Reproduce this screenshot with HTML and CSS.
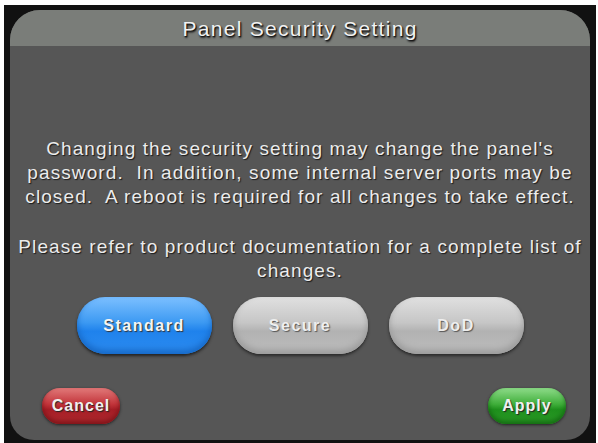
FILE: index.html
```html
<!DOCTYPE html>
<html lang="en">
<head>
  <meta charset="UTF-8">
  <title>Panel Security Setting</title>
  <link rel="stylesheet" href="styles.css">
</head>
<body>
  <div class="frame">
    <div class="panel">
      <div class="title">Panel Security Setting</div>
      <div class="body">
        <p class="msg">Changing the security setting may change the panel's<br>password.&nbsp; In addition, some internal server ports may be<br>closed.&nbsp; A reboot is required for all changes to take effect.</p>
        <p class="msg">Please refer to product documentation for a complete list of<br>changes.</p>
        <div class="choices">
          <button class="pill blue">Standard</button>
          <button class="pill grey">Secure</button>
          <button class="pill grey">DoD</button>
        </div>
      </div>
      <div class="actions">
        <button class="small red">Cancel</button>
        <button class="small green">Apply</button>
      </div>
    </div>
  </div>
</body>
</html>
```

FILE: styles.css
```css
* {
  box-sizing: border-box;
}

html, body {
  margin: 0;
  padding: 0;
  height: 100%;
  background: #fff;
  font-family: 'Liberation Sans', Arial, sans-serif;
}

.frame {
  margin: 5px 2px 0 4px;
  height: 438px;
  background: #111;
  padding: 5px 6px 3px 6px;
}

.panel {
  height: 100%;
  background: #565656;
  border-radius: 30px 30px 24px 24px;
  display: flex;
  flex-direction: column;
  overflow: hidden;
}

.title {
  height: 36px;
  background: #7a7d79;
  color: #f2f2f2;
  text-align: center;
  font-size: 21px;
  letter-spacing: 1.3px;
  line-height: 38px;
  text-shadow: 1px 1px 1px #111, 1px 2px 2px #222;
}

.body {
  flex-grow: 1;
  padding-top: 91px;
}

.msg {
  margin: 0 0 26px;
  text-align: center;
  white-space: nowrap;
  color: #ececec;
  font-size: 19px;
  letter-spacing: 1.1px;
  line-height: 24px;
  text-shadow: 1px 1px 1px #1a1a1a;
}

.choices {
  display: flex;
  justify-content: center;
  gap: 21px;
  margin-top: -12px;
}

.pill {
  width: 135px;
  height: 57px;
  border: none;
  border-radius: 28px;
  font-family: inherit;
  font-size: 16px;
  font-weight: bold;
  letter-spacing: 1.5px;
  color: #f4f4f4;
  text-shadow: 1px 1px 1px #333;
}

.pill.blue {
  background: linear-gradient(#7cc0ff 0%, #3c99f2 45%, #1f82ec 60%, #2d8cf0 100%);
  box-shadow: 0 2px 3px #222, inset 0 -4px 6px #1668c6;
}

.pill.grey {
  color: #eee;
  background: linear-gradient(#e0e0e0 0%, #c6c6c6 45%, #b2b2b2 60%, #bdbdbd 100%);
  box-shadow: 0 2px 3px #2a2a2a, inset 0 -4px 6px #9a9a9a;
  text-shadow: 1px 1px 1px #555;
}

.actions {
  display: flex;
  justify-content: space-between;
  padding: 0 24px 16px 32px;
}

.small {
  width: 78px;
  height: 36px;
  border: none;
  border-radius: 18px;
  font-family: inherit;
  font-size: 16px;
  font-weight: bold;
  letter-spacing: 1px;
  color: #f0f0f0;
  text-shadow: 1px 1px 1px #222;
}

.small.red {
  background: linear-gradient(#e27a7a 0%, #c2343a 45%, #a61e26 60%, #b02a30 100%);
  box-shadow: 0 1px 3px #222, inset 0 -3px 5px #7e1318;
}

.small.green {
  background: linear-gradient(#8fdc8a 0%, #3fae3a 45%, #1f901d 60%, #2a9a26 100%);
  box-shadow: 0 1px 3px #222, inset 0 -3px 5px #146a12;
}
```
